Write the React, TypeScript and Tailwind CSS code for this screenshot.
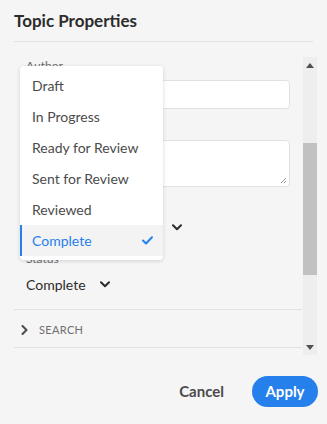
const items = ['Draft', 'In Progress', 'Ready for Review', 'Sent for Review', 'Reviewed', 'Complete']

function Chevron({ className }: { className?: string }) {
  return (
    <svg width="10" height="7" viewBox="0 0 10 7" className={className}>
      <path d="M1 1.2 L5 5.2 L9 1.2" fill="none" stroke="#2c2c2c" strokeWidth="2" strokeLinecap="round" strokeLinejoin="round" />
    </svg>
  )
}

function Field({ label }: { label: string }) {
  return <div className="h-[16px] text-[12px] leading-[16px] text-[#6e6e6e]">{label}</div>
}

export default function App() {
  return (
    <div className="w-[327px] h-[424px] bg-[#f5f5f5] relative overflow-hidden font-['Lato','Liberation_Sans',sans-serif]">
      <div className="mx-[14px] h-[42px] border-b border-[#e2e2e2] flex items-center text-[17px] font-bold text-[#2c2c2c]">
        Topic Properties
      </div>

      <div className="flex pl-[14px] pr-[10px] pt-[15px]">
        <div className="flex-1 h-[298px] overflow-hidden">
          <div className="px-[12px] pt-[1px]">
            <Field label="Author" />
            <div className="mt-[6px] h-[29px] bg-white border border-[#e1e1e1] rounded-[4px]" />
            {/* label under the menu */}
            <div className="mt-[9px] h-[16px]" />
            <div className="mt-[6px] h-[47px] bg-white border border-[#e1e1e1] rounded-[4px] relative">
              <svg width="7" height="7" viewBox="0 0 7 7" className="absolute right-[2px] bottom-[2px]">
                <path d="M6 1 L1 6 M6 4 L4 6" stroke="#9a9a9a" strokeWidth="1" />
              </svg>
            </div>
            <div className="mt-[10px] h-[16px]" />
            <div className="h-[28px] flex items-center pl-[146px]">
              <Chevron />
            </div>
            <div className="mt-[10px]">
              <Field label="Status" />
            </div>
            <div className="h-[31px] pt-[3px] flex items-center gap-[14px] text-[14px] text-[#2c2c2c]">
              <span>Complete</span>
              <Chevron />
            </div>
          </div>
          <div className="mt-[11px] border-t border-[#e2e2e2] h-[39px] border-b flex items-center gap-[11px] pl-[7px] pt-[3px]">
            <svg width="7" height="10" viewBox="0 0 7 10">
              <path d="M1.5 1 L5.5 5 L1.5 9" fill="none" stroke="#4b4b4b" strokeWidth="2" strokeLinecap="round" strokeLinejoin="round" />
            </svg>
            <span className="text-[11px] tracking-[0.03em] text-[#6e6e6e]">SEARCH</span>
          </div>
        </div>

        <div className="w-[14px] ml-[1px] h-[298px] bg-[#eeeeee] flex flex-col items-center">
          <div className="h-[16px] flex items-center justify-center">
            <svg width="8" height="5" viewBox="0 0 8 5"><path d="M0 5 L4 0 L8 5 Z" fill="#505050" /></svg>
          </div>
          <div className="mt-[70px] w-full h-[132px] bg-[#c1c1c1]" />
          <div className="flex-1" />
          <div className="h-[16px] flex items-center justify-center">
            <svg width="8" height="5" viewBox="0 0 8 5"><path d="M0 0 L4 5 L8 0 Z" fill="#505050" /></svg>
          </div>
        </div>
      </div>

      <div className="mt-[21px] flex items-center justify-end pr-[9px] gap-[28px]">
        <button className="text-[15px] font-bold text-[#4b4b4b]">Cancel</button>
        <button className="w-[66px] h-[31px] rounded-full bg-[#2680eb] text-white text-[15px] font-bold">Apply</button>
      </div>

      <div className="absolute left-[20px] top-[66px] w-[143px] bg-white rounded-[4px] shadow-[0_1px_4px_rgba(0,0,0,0.15)] py-[4px]">
        {items.map((it) => {
          const sel = it === 'Complete'
          return (
            <div
              key={it}
              className={
                sel
                  ? 'h-[31px] flex items-center justify-between pl-[10px] pr-[10px] border-l-2 border-[#2680eb] bg-[#f3f3f3] text-[14px] text-[#2680eb]'
                  : 'h-[31px] flex items-center pl-[12px] text-[14px] text-[#4b4b4b]'
              }
            >
              <span>{it}</span>
              {sel && (
                <svg width="11" height="9" viewBox="0 0 11 9">
                  <path d="M1 4.5 L4 7.5 L10 1.2" fill="none" stroke="#2680eb" strokeWidth="2" strokeLinecap="round" strokeLinejoin="round" />
                </svg>
              )}
            </div>
          )
        })}
      </div>
    </div>
  )
}
